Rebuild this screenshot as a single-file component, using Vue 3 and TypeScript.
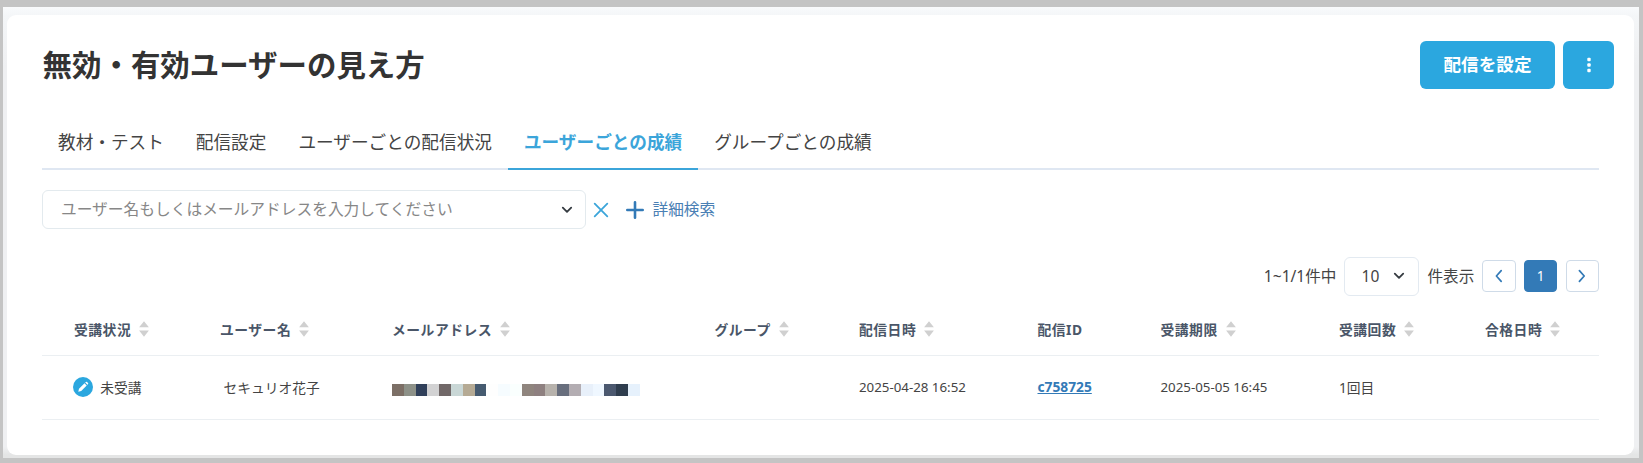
<script setup lang="ts">
interface Tab {
  label: string
  active?: boolean
}
interface Column {
  label: string
  sortable: boolean
}

const tabs: Tab[] = [
  { label: '教材・テスト' },
  { label: '配信設定' },
  { label: 'ユーザーごとの配信状況' },
  { label: 'ユーザーごとの成績', active: true },
  { label: 'グループごとの成績' },
]

const columns: Column[] = [
  { label: '受講状況', sortable: true },
  { label: 'ユーザー名', sortable: true },
  { label: 'メールアドレス', sortable: true },
  { label: 'グループ', sortable: true },
  { label: '配信日時', sortable: true },
  { label: '配信ID', sortable: false },
  { label: '受講期限', sortable: true },
  { label: '受講回数', sortable: true },
  { label: '合格日時', sortable: true },
]

// Redacted e-mail address, drawn as a row of mosaic tiles.
const mosaic: string[] = [
  '#7c6f66', '#8d9188', '#30405a', '#d2d2d3', '#716868', '#c9d7d6', '#b5aa94', '#465b70',
  '#fefefe', '#f6fcff', '#fafffe', '#8f857e', '#8e8080', '#b7b2ac', '#686e7d', '#b3adb2',
  '#e8f0fa', '#eff7ff', '#4b586f', '#2f3d4e', '#e6f1fc',
]
</script>

<template>
  <div class="frame">
    <main class="card">
      <header class="head">
        <h1>無効・有効ユーザーの見え方</h1>
        <div class="actions">
          <button class="primary">配信を設定</button>
          <button class="primary more" aria-label="menu">
            <svg width="6" height="16" viewBox="0 0 6 16" fill="#fff">
              <rect x="1.3" y="0.8" width="3.4" height="3.4" rx="1" />
              <rect x="1.3" y="6.3" width="3.4" height="3.4" rx="1" />
              <rect x="1.3" y="11.8" width="3.4" height="3.4" rx="1" />
            </svg>
          </button>
        </div>
      </header>

      <nav class="tabs">
        <a v-for="t in tabs" :key="t.label" class="tab" :class="{ active: t.active }">{{ t.label }}</a>
      </nav>

      <section class="search">
        <div class="combo">
          <span>ユーザー名もしくはメールアドレスを入力してください</span>
          <svg width="12" height="8" viewBox="0 0 12 8" fill="none" stroke="#343a40" stroke-width="1.8" stroke-linecap="round" stroke-linejoin="round"><path d="M1.8 1.6 6 5.8l4.2-4.2" /></svg>
        </div>
        <svg class="clear" width="16" height="16" viewBox="0 0 16 16" fill="none" stroke="#3ba5da" stroke-width="1.8" stroke-linecap="round"><path d="M1.7 1.7 14.3 14.3M14.3 1.7 1.7 14.3" /></svg>
        <svg class="plus" width="18" height="18" viewBox="0 0 18 18" fill="none" stroke="#337ab7" stroke-width="2.6" stroke-linecap="round"><path d="M9 1.3v15.4M1.3 9h15.4" /></svg>
        <a class="detail">詳細検索</a>
      </section>

      <section class="pager">
        <span class="count">1~1/1件中</span>
        <div class="size">
          <span>10</span>
          <svg width="12" height="8" viewBox="0 0 12 8" fill="none" stroke="#343a40" stroke-width="1.8" stroke-linecap="round" stroke-linejoin="round"><path d="M1.8 1.6 6 5.8l4.2-4.2" /></svg>
        </div>
        <span class="unit">件表示</span>
        <button class="page" aria-label="prev">
          <svg width="8" height="14" viewBox="0 0 8 14" fill="none" stroke="#337ab7" stroke-width="1.7" stroke-linecap="round" stroke-linejoin="round"><path d="M6.2 1.6 1.4 7l4.8 5.4" /></svg>
        </button>
        <button class="page current">1</button>
        <button class="page" aria-label="next">
          <svg width="8" height="14" viewBox="0 0 8 14" fill="none" stroke="#337ab7" stroke-width="1.7" stroke-linecap="round" stroke-linejoin="round"><path d="M1.4 1.6 6.2 7l-4.8 5.4" /></svg>
        </button>
      </section>

      <section class="table">
        <div class="row th">
          <div v-for="c in columns" :key="c.label" class="cell">
            <span>{{ c.label }}</span>
            <svg v-if="c.sortable" class="sort" width="10" height="16" viewBox="0 0 10 16" fill="#d0d0d0"><path d="M5 .2 9.9 6.3H.1zM5 15.7.1 9.6h9.8z" /></svg>
          </div>
        </div>
        <div class="row td">
          <div class="cell">
            <svg class="status" width="20" height="20" viewBox="0 0 20 20">
              <circle cx="10" cy="10" r="10" fill="#2ba7df" />
              <path d="M5.3 14.7l.7-2.9 5.5-5.5 2.2 2.2-5.5 5.5zM12.2 5.6l.6-.6q.6-.5 1.2 0l1 1q.5.6 0 1.2l-.6.6z" fill="#fff" />
            </svg>
            <span>未受講</span>
          </div>
          <div class="cell user">セキュリオ花子</div>
          <div class="cell mosaic">
            <i v-for="(c, i) in mosaic" :key="i" :style="{ background: c }"></i>
          </div>
          <div class="cell"></div>
          <div class="cell date">2025-04-28 16:52</div>
          <div class="cell"><a class="id">c758725</a></div>
          <div class="cell date">2025-05-05 16:45</div>
          <div class="cell">1回目</div>
          <div class="cell"></div>
        </div>
      </section>
    </main>
  </div>
</template>

<style>
body {
  background: #c4c4c4;
}
</style>

<style scoped>
* {
  box-sizing: border-box;
}
.frame {
  width: 1643px;
  height: 463px;
  border: solid #c4c4c4;
  border-width: 7px 4px 5px 3px;
  padding: 8px 5px 3px 4px;
  background: linear-gradient(#f9fafc, #f4f6f8 8px, #eff0f2 60px, #eff0f2 440px, #e4e5e5 448px);
  font-family: "Noto Sans", "Noto Sans CJK JP", sans-serif;
  color: #444;
}
.card {
  height: 440px;
  border-radius: 9px;
  background: #fff;
  padding: 26px 35px 0;
  display: flex;
  flex-direction: column;
}
.head {
  height: 48px;
  display: flex;
  justify-content: space-between;
  margin-right: -15px;
}
h1 {
  margin: 0;
  padding-left: 0.6px;
  font-size: 29.45px;
  line-height: 44px;
  font-weight: 700;
  color: #333;
  font-family: "Noto Sans CJK JP", sans-serif;
}
.actions {
  display: flex;
  gap: 8px;
}
button {
  font-family: inherit;
  padding: 0;
  margin: 0;
}
.primary {
  width: 135px;
  height: 48px;
  border: 0;
  border-radius: 6px;
  background: #2ba7df;
  color: #fff;
  font-size: 17.6px;
  font-weight: 700;
  padding-bottom: 3px;
}
.more {
  width: 51px;
  display: flex;
  align-items: center;
  justify-content: center;
}
.more svg {
  margin-top: 2px;
}
.tabs {
  display: flex;
  height: 45px;
  margin-top: 36px;
  box-shadow: inset 0 -2px #dfe7f2;
}
.tab {
  padding: 0 16px;
  font-size: 17.65px;
  line-height: 34px;
  white-space: nowrap;
}
.tab.active {
  color: #3ba5da;
  font-weight: 700;
  box-shadow: inset 0 -2px #3ba5da;
}
.search {
  display: flex;
  align-items: center;
  height: 39px;
  margin-top: 20px;
}
.combo {
  width: 544px;
  height: 39px;
  border: 1px solid #e3eaee;
  border-radius: 6px;
  display: flex;
  align-items: center;
  justify-content: space-between;
  padding: 0 12px 0 18px;
  font-size: 15.72px;
  color: #878787;
}
.combo span,
.detail {
  padding-bottom: 2px;
}
.clear {
  margin-left: 7.4px;
}
.plus {
  margin-left: 16.6px;
}
.detail {
  margin-left: 8.5px;
  font-size: 15.7px;
  color: #4a80b4;
}
.pager {
  display: flex;
  justify-content: flex-end;
  align-items: center;
  height: 40px;
  margin-top: 27px;
  font-size: 15.6px;
}
.count,
.unit {
  padding-bottom: 1px;
}
.size {
  width: 75px;
  height: 39px;
  margin: 0 8px;
  border: 1px solid #e3eaf1;
  border-radius: 6px;
  display: flex;
  align-items: center;
  justify-content: space-between;
  padding: 0 13px 0 16px;
  font-size: 15.6px;
}
.page {
  width: 33.4px;
  height: 32px;
  margin-left: 8.2px;
  border: 1px solid #cfdbe8;
  border-radius: 4px;
  background: #fff;
  display: flex;
  align-items: center;
  justify-content: center;
}
.page.current {
  background: #337ab7;
  border-color: #337ab7;
  color: #fff;
  font-size: 13.5px;
}
.row {
  display: grid;
  grid-template-columns: 146px 172px 322.5px 144.5px 178.5px 123px 178.5px 146px 1fr;
  padding-left: 32px;
  border-bottom: 1px solid #ebeff2;
  align-items: center;
}
.cell {
  display: flex;
  align-items: center;
  white-space: nowrap;
}
.th {
  height: 60px;
  padding-top: 7px;
  font-size: 13.8px;
  letter-spacing: 0.5px;
  font-weight: 700;
  color: #4a5668;
}
.th span {
  padding-bottom: 1px;
}
.sort {
  margin-left: 8.2px;
}
.td {
  height: 64px;
  padding-bottom: 2px;
  font-size: 13.75px;
}
.date {
  font-size: 13.3px;
}
.status {
  margin: 0 7.2px 0 -1px;
}
.user {
  padding-left: 3.5px;
}
.mosaic i {
  width: 11.8px;
  height: 12px;
  margin-top: 7px;
}
.id {
  color: #337ab7;
  font-weight: 700;
  text-decoration: underline;
}
</style>
